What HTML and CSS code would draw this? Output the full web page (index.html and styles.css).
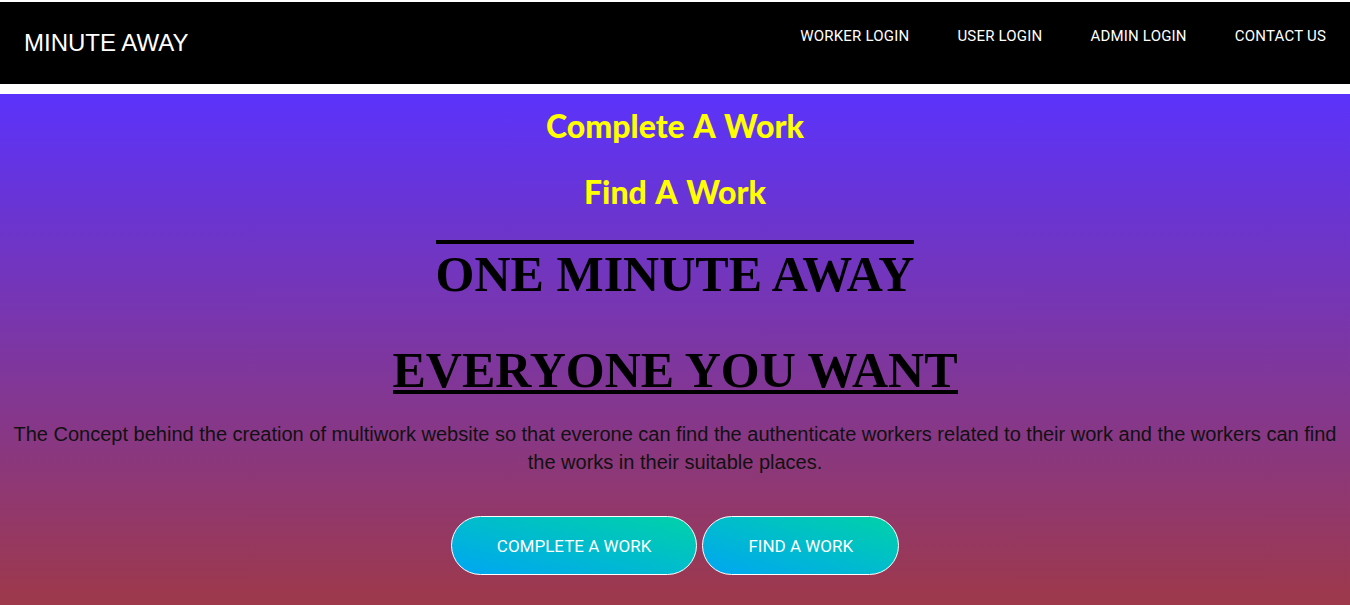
FILE: index.html
```html
<!DOCTYPE html>
<html lang="en">
<head>
<meta charset="utf-8">
<title>Minute Away</title>
<link rel="stylesheet" href="styles.css">
</head>
<body>
<nav class="navbar">
  <a class="brand" href="#">MINUTE AWAY</a>
  <ul class="nav-links">
    <li><a href="#">WORKER LOGIN</a></li>
    <li><a href="#">USER LOGIN</a></li>
    <li><a href="#">ADMIN LOGIN</a></li>
    <li><a href="#">CONTACT US</a></li>
  </ul>
</nav>
<main class="hero">
  <h1 class="tagline tagline-first">Complete A Work</h1>
  <h1 class="tagline tagline-second">Find A Work</h1>
  <h2 class="title title-over">ONE MINUTE AWAY</h2>
  <h2 class="title title-under">EVERYONE YOU WANT</h2>
  <p class="intro">The Concept behind the creation of multiwork website so that everone can find the authenticate workers related to their work and the workers can find the works in their suitable places.</p>
  <div class="actions">
    <a class="btn btn-wide" href="#">COMPLETE A WORK</a>
    <a class="btn" href="#">FIND A WORK</a>
  </div>
</main>
</body>
</html>
```

FILE: styles.css
```css
html, body {
  margin: 0;
  padding: 0;
}

body {
  background: #ffffff;
  padding-top: 2px;
  min-height: 603px;
  display: flex;
  flex-direction: column;
}

.navbar {
  height: 82px;
  background: #000000;
  display: flex;
  justify-content: space-between;
  align-items: flex-start;
  margin-bottom: 10px;
}

.brand {
  align-self: center;
  padding-left: 24px;
  font-family: "Liberation Sans", Arial, sans-serif;
  font-size: 24px;
  color: #ffffff;
  text-decoration: none;
}

.nav-links {
  list-style: none;
  margin: 0;
  padding: 25px 0 0 0;
  display: flex;
}

.nav-links a {
  display: block;
  padding: 0 24px;
  font-family: Roboto, "Liberation Sans", sans-serif;
  font-size: 15px;
  letter-spacing: 0.2px;
  color: #ffffff;
  text-decoration: none;
}

.hero {
  flex: 1;
  background: linear-gradient(to bottom, #5b33fb 0%, #9e394a 100%);
  display: flex;
  flex-direction: column;
  align-items: center;
  padding-top: 12px;
}

.tagline {
  margin: 0;
  font-family: "Comic Sans MS", Lato, sans-serif;
  font-weight: 900;
  font-size: 32px;
  line-height: 40px;
  color: #ffff00;
  word-spacing: 2px;
}

.tagline-second {
  margin-top: 26px;
}

.title {
  margin: 0;
  font-family: "Liberation Serif", "Times New Roman", serif;
  font-weight: bold;
  font-size: 50px;
  color: #000000;
}

.title-over {
  margin-top: 28px;
  border-top: 4px solid #000000;
  line-height: 60px;
}

.title-under {
  margin-top: 46px;
  border-bottom: 4px solid #000000;
  line-height: 40px;
}

.intro {
  margin: 26px 0 0 0;
  padding: 0 5px;
  font-family: "Liberation Sans", Arial, sans-serif;
  font-size: 20px;
  line-height: 28px;
  text-align: center;
  color: #111111;
}

.actions {
  margin-top: 40px;
  display: flex;
  gap: 5px;
}

.btn {
  box-sizing: border-box;
  height: 59px;
  padding: 0 45px;
  display: flex;
  align-items: center;
  border: 1px solid #ffffff;
  border-radius: 29.5px;
  background: linear-gradient(to top right, #00a6f2 0%, #00d2a8 100%);
  font-family: Roboto, "Liberation Sans", sans-serif;
  font-size: 17px;
  color: #ffffff;
  text-decoration: none;
}
```
